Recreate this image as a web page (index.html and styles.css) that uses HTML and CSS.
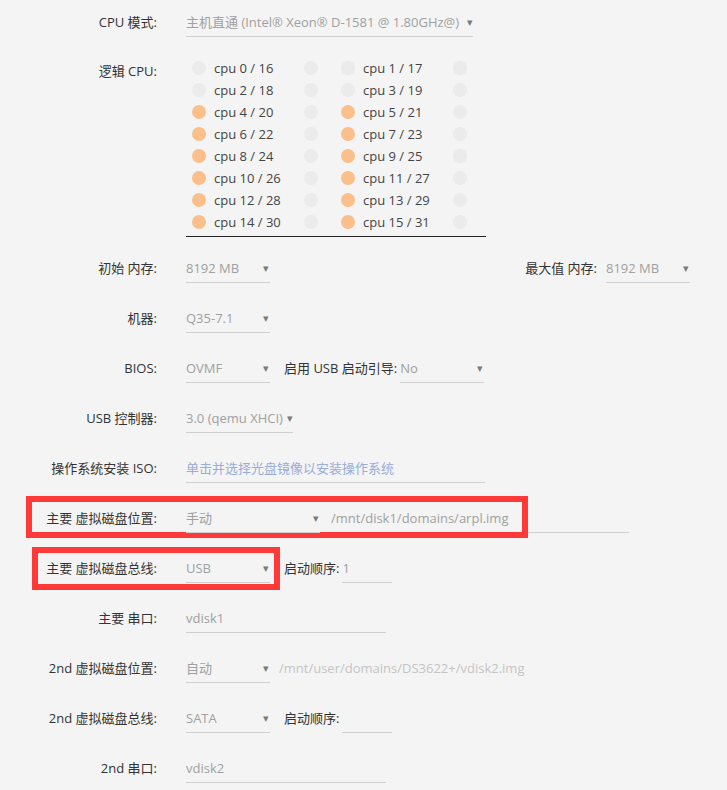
FILE: index.html
```html
<!DOCTYPE html>
<html lang="zh-CN">
<head>
    <meta charset="UTF-8">
    <meta name="viewport" content="width=device-width, initial-scale=1.0">
    <title>虚拟机设置</title>
    <link rel="stylesheet" href="styles.css">
</head>
<body>
    <div class="form">

        <div class="row row-first">
            <label class="label">CPU 模式:</label>
            <div class="select select-cpu">主机直通 (Intel® Xeon® D-1581 @ 1.80GHz@)<span class="arrow">▾</span></div>
        </div>

        <div class="row row-cpus">
            <label class="label label-cpus">逻辑 CPU:</label>
            <div class="cpus">
                <div class="cpu"><span class="dot"></span><span class="cpu-name">cpu 0 / 16</span><span class="dot"></span></div>
                <div class="cpu"><span class="dot"></span><span class="cpu-name">cpu 1 / 17</span><span class="dot"></span></div>
                <div class="cpu"><span class="dot"></span><span class="cpu-name">cpu 2 / 18</span><span class="dot"></span></div>
                <div class="cpu"><span class="dot"></span><span class="cpu-name">cpu 3 / 19</span><span class="dot"></span></div>
                <div class="cpu"><span class="dot on"></span><span class="cpu-name">cpu 4 / 20</span><span class="dot"></span></div>
                <div class="cpu"><span class="dot on"></span><span class="cpu-name">cpu 5 / 21</span><span class="dot"></span></div>
                <div class="cpu"><span class="dot on"></span><span class="cpu-name">cpu 6 / 22</span><span class="dot"></span></div>
                <div class="cpu"><span class="dot on"></span><span class="cpu-name">cpu 7 / 23</span><span class="dot"></span></div>
                <div class="cpu"><span class="dot on"></span><span class="cpu-name">cpu 8 / 24</span><span class="dot"></span></div>
                <div class="cpu"><span class="dot on"></span><span class="cpu-name">cpu 9 / 25</span><span class="dot"></span></div>
                <div class="cpu"><span class="dot on"></span><span class="cpu-name">cpu 10 / 26</span><span class="dot"></span></div>
                <div class="cpu"><span class="dot on"></span><span class="cpu-name">cpu 11 / 27</span><span class="dot"></span></div>
                <div class="cpu"><span class="dot on"></span><span class="cpu-name">cpu 12 / 28</span><span class="dot"></span></div>
                <div class="cpu"><span class="dot on"></span><span class="cpu-name">cpu 13 / 29</span><span class="dot"></span></div>
                <div class="cpu"><span class="dot on"></span><span class="cpu-name">cpu 14 / 30</span><span class="dot"></span></div>
                <div class="cpu"><span class="dot on"></span><span class="cpu-name">cpu 15 / 31</span><span class="dot"></span></div>
            </div>
        </div>

        <div class="row">
            <label class="label">初始 内存:</label>
            <div class="select">8192 MB<span class="arrow">▾</span></div>
            <label class="inline-label push">最大值 内存:</label>
            <div class="select">8192 MB<span class="arrow">▾</span></div>
        </div>

        <div class="row">
            <label class="label">机器:</label>
            <div class="select">Q35-7.1<span class="arrow">▾</span></div>
        </div>

        <div class="row">
            <label class="label">BIOS:</label>
            <div class="select">OVMF<span class="arrow">▾</span></div>
            <label class="inline-label">启用 USB 启动引导:</label>
            <div class="select">No<span class="arrow">▾</span></div>
        </div>

        <div class="row">
            <label class="label">USB 控制器:</label>
            <div class="select select-usb">3.0 (qemu XHCI)<span class="arrow">▾</span></div>
        </div>

        <div class="row">
            <label class="label">操作系统安装 ISO:</label>
            <div class="input input-iso">单击并选择光盘镜像以安装操作系统</div>
        </div>

        <div class="row">
            <div class="mark mark-one"></div>
            <label class="label">主要 虚拟磁盘位置:</label>
            <div class="select select-wide">手动<span class="arrow">▾</span></div>
            <div class="input input-path">/mnt/disk1/domains/arpl.img</div>
        </div>

        <div class="row">
            <div class="mark mark-two"></div>
            <label class="label">主要 虚拟磁盘总线:</label>
            <div class="select">USB<span class="arrow">▾</span></div>
            <label class="inline-label">启动顺序:</label>
            <div class="input input-order">1</div>
        </div>

        <div class="row">
            <label class="label">主要 串口:</label>
            <div class="input input-serial">vdisk1</div>
        </div>

        <div class="row">
            <label class="label">2nd 虚拟磁盘位置:</label>
            <div class="select">自动<span class="arrow">▾</span></div>
            <div class="path-hint">/mnt/user/domains/DS3622+/vdisk2.img</div>
        </div>

        <div class="row">
            <label class="label">2nd 虚拟磁盘总线:</label>
            <div class="select">SATA<span class="arrow">▾</span></div>
            <label class="inline-label">启动顺序:</label>
            <div class="input input-order"></div>
        </div>

        <div class="row">
            <label class="label">2nd 串口:</label>
            <div class="input input-serial">vdisk2</div>
        </div>

    </div>
</body>
</html>
```

FILE: styles.css
```css
body {
    margin: 0;
    padding: 0;
    background-color: #f4f4f4;
    font-family: "Open Sans", "Noto Sans CJK SC", sans-serif;
    font-size: 13px;
    color: #333;
}

.form {
    padding: 11px 37px 0 0;
}

.row {
    position: relative;
    display: flex;
    align-items: flex-start;
    margin-bottom: 24px;
    height: 26px;
}

.row-first {
    margin-bottom: 20px;
}

.row-cpus {
    height: auto;
    margin-bottom: 20px;
}

.label {
    width: 157px;
    margin-right: 29px;
    text-align: right;
    line-height: 22px;
    white-space: nowrap;
    flex-shrink: 0;
}

.label-cpus {
    padding-top: 3px;
}

.inline-label {
    line-height: 22px;
    margin: 0 3px 0 14px;
    white-space: nowrap;
}

.push {
    margin-left: auto;
    margin-right: 9px;
}

.select {
    position: relative;
    box-sizing: border-box;
    width: 84px;
    height: 26px;
    line-height: 22px;
    padding-right: 12px;
    color: #a0a0a0;
    border-bottom: 1px solid #cfcfcf;
    white-space: nowrap;
    flex-shrink: 0;
}

.select-cpu {
    width: 287px;
}

.select-usb {
    width: 107px;
}

.select-wide {
    width: 134px;
}

.arrow {
    position: absolute;
    right: 1px;
    top: 0;
    font-size: 11px;
    color: #7a7a7a;
}

.select-cpu .arrow,
.select-usb .arrow {
    right: 0;
}

.input {
    box-sizing: border-box;
    height: 26px;
    line-height: 22px;
    color: #a0a0a0;
    border-bottom: 1px solid #cfcfcf;
    white-space: nowrap;
    flex-shrink: 0;
}

.input-iso {
    width: 299px;
    color: #98acda;
}

.input-path {
    width: 299px;
    margin-left: 10px;
    padding-left: 1px;
}

.input-order {
    width: 50px;
}

.input-serial {
    width: 200px;
}

.path-hint {
    line-height: 22px;
    margin-left: 9px;
    color: #c4c4c4;
    white-space: nowrap;
}

/* grade das cpus */
.cpus {
    display: grid;
    grid-template-columns: 149px 149px;
    width: 300px;
    padding-bottom: 3px;
    border-bottom: 1px solid #222;
}

.cpu {
    display: flex;
    align-items: center;
    height: 22px;
    padding-left: 6px;
}

.cpu-name {
    width: 90px;
    margin-left: 8px;
    color: #444;
    white-space: nowrap;
}

.dot {
    width: 14px;
    height: 14px;
    border-radius: 50%;
    background-color: #ebebeb;
    flex-shrink: 0;
}

.dot.on {
    background-color: #fbbf8c;
}

/* marcação vermelha por cima do formulario */
.mark {
    position: absolute;
    border: 6px solid #ff3838;
    box-sizing: border-box;
    pointer-events: none;
}

.mark-one {
    left: 26px;
    top: -11px;
    width: 502px;
    height: 42px;
}

.mark-two {
    left: 32px;
    top: -10px;
    width: 248px;
    height: 43px;
}
```
